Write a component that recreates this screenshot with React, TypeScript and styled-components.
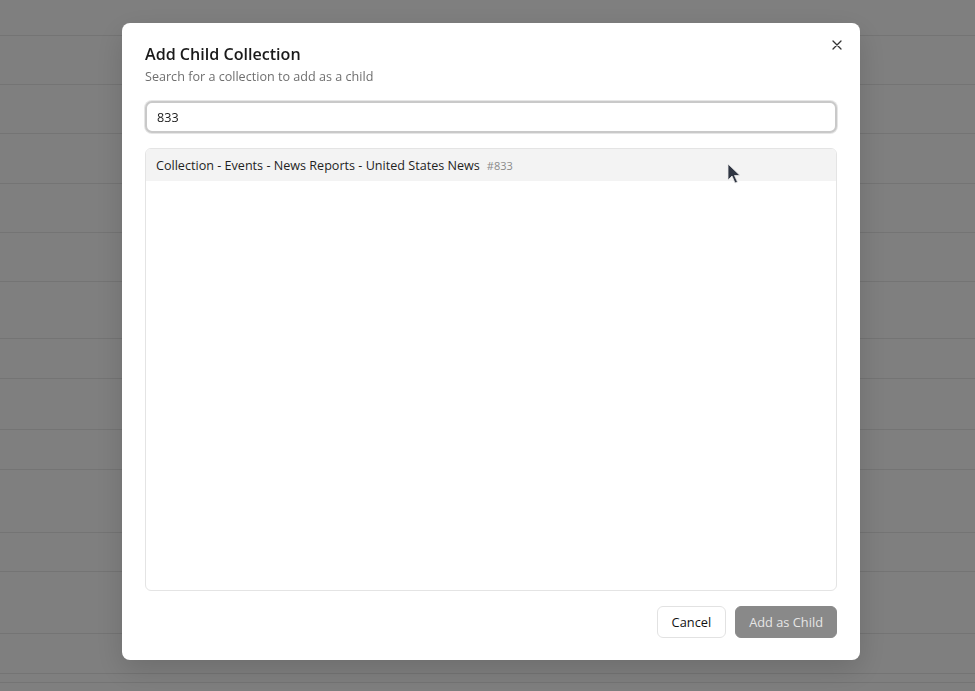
import React, { useState } from 'react';
import styled, { createGlobalStyle } from 'styled-components';

const GlobalStyle = createGlobalStyle`
  html, body {
    margin: 0;
    padding: 0;
    height: 100%;
    overflow: hidden;
  }
  body {
    font-family: "Open Sans", "Noto Sans", sans-serif;
    background: #ffffff;
  }
  * {
    box-sizing: border-box;
  }
`;

// heights of the table rows behind the overlay
const rowHeights = [36, 49, 49, 50, 49, 49, 57, 40, 51, 40, 63, 39, 62, 40, 9, 20];

const results = [
  { id: 833, name: 'Collection - Events - News Reports - United States News' },
];

function App() {
  const [query, setQuery] = useState('833');

  return (
    <>
      <GlobalStyle />
      <Page>
        {rowHeights.map((h, i) => (
          <BgRow key={i} style={{ height: h }} />
        ))}
      </Page>
      <Overlay />
      <Dialog>
        <CloseButton aria-label="Close">
          <svg width="10" height="10" viewBox="0 0 10 10">
            <path d="M1 1L9 9M9 1L1 9" stroke="#333" strokeWidth="1.3" strokeLinecap="round" />
          </svg>
        </CloseButton>
        <Header>
          <Title>Add Child Collection</Title>
          <Subtitle>Search for a collection to add as a child</Subtitle>
        </Header>
        <SearchInput
          type="text"
          value={query}
          onChange={(e) => setQuery(e.target.value)}
        />
        <ResultList>
          {results.map((r, i) => (
            <ResultItem key={r.id} $active={i === 0}>
              <span>{r.name}</span>
              <ResultId>#{r.id}</ResultId>
            </ResultItem>
          ))}
        </ResultList>
        <Footer>
          <Button>Cancel</Button>
          <Button $primary disabled>Add as Child</Button>
        </Footer>
      </Dialog>
      <Cursor width="14" height="22" viewBox="0 0 14 22">
        <path d="M1 1L1 17L5 13L8 20L10.5 19L7.5 12.5L13 12.5Z" fill="#2f3542" stroke="#e8e8e8" strokeWidth="0.8" />
      </Cursor>
    </>
  );
}

const Page = styled.div`
  display: flex;
  flex-direction: column;
  height: 100vh;
  background: #ffffff;
`;

const BgRow = styled.div`
  flex-shrink: 0;
  border-bottom: 1px solid #e8e8e8;
`;

const Overlay = styled.div`
  position: fixed;
  inset: 0;
  background: rgba(0, 0, 0, 0.5);
`;

const Dialog = styled.div`
  position: fixed;
  left: 122px;
  top: 23px;
  width: 738px;
  height: 637px;
  background: #ffffff;
  border-radius: 8px;
  padding: 20px 23px 22px;
  display: flex;
  flex-direction: column;
  box-shadow: 0 10px 30px rgba(0, 0, 0, 0.15);
`;

const CloseButton = styled.button`
  position: absolute;
  top: 14px;
  right: 15px;
  width: 16px;
  height: 16px;
  padding: 0;
  border: none;
  background: transparent;
  display: flex;
  align-items: center;
  justify-content: center;
  cursor: pointer;
`;

const Header = styled.div`
  display: flex;
  flex-direction: column;
  gap: 2px;
  margin-bottom: 14px;
`;

const Title = styled.h2`
  margin: 0;
  font-size: 16.1px;
  line-height: 22px;
  font-weight: 600;
  color: #1a1a1a;
`;

const Subtitle = styled.p`
  margin: 0;
  font-size: 12.6px;
  line-height: 20px;
  color: #6f6f6f;
`;

const SearchInput = styled.input`
  height: 32px;
  width: 100%;
  padding: 0 10px;
  border: 2px solid #c9c9c9;
  border-radius: 7px;
  font-family: inherit;
  font-size: 12.6px;
  color: #1a1a1a;
  outline: none;
  box-shadow: 0 0 0 1px #e6e6e6;
  flex-shrink: 0;
`;

const ResultList = styled.div`
  margin-top: 15px;
  flex: 1;
  border: 1px solid #e4e4e4;
  border-radius: 6px;
  overflow: hidden;
`;

const ResultItem = styled.div<{ $active?: boolean }>`
  display: flex;
  align-items: center;
  gap: 7px;
  height: 32px;
  padding: 0 10px;
  font-size: 12.6px;
  color: #1f1f1f;
  background: ${(p) => (p.$active ? '#f3f3f3' : '#ffffff')};
`;

const ResultId = styled.span`
  font-size: 11px;
  color: #8a8a8a;
`;

const Footer = styled.div`
  display: flex;
  justify-content: flex-end;
  gap: 9px;
  margin-top: 15px;
`;

const Button = styled.button<{ $primary?: boolean }>`
  height: 32px;
  padding: 0 ${(p) => (p.$primary ? '13px' : '14px')};
  border-radius: 6px;
  font-family: inherit;
  font-size: 12.8px;
  font-weight: 500;
  border: 1px solid ${(p) => (p.$primary ? '#898989' : '#e2e2e2')};
  background: ${(p) => (p.$primary ? '#898989' : '#ffffff')};
  color: ${(p) => (p.$primary ? '#e6e6e6' : '#111111')};
`;

const Cursor = styled.svg`
  position: fixed;
  left: 727px;
  top: 163px;
  pointer-events: none;
`;

export default App;
